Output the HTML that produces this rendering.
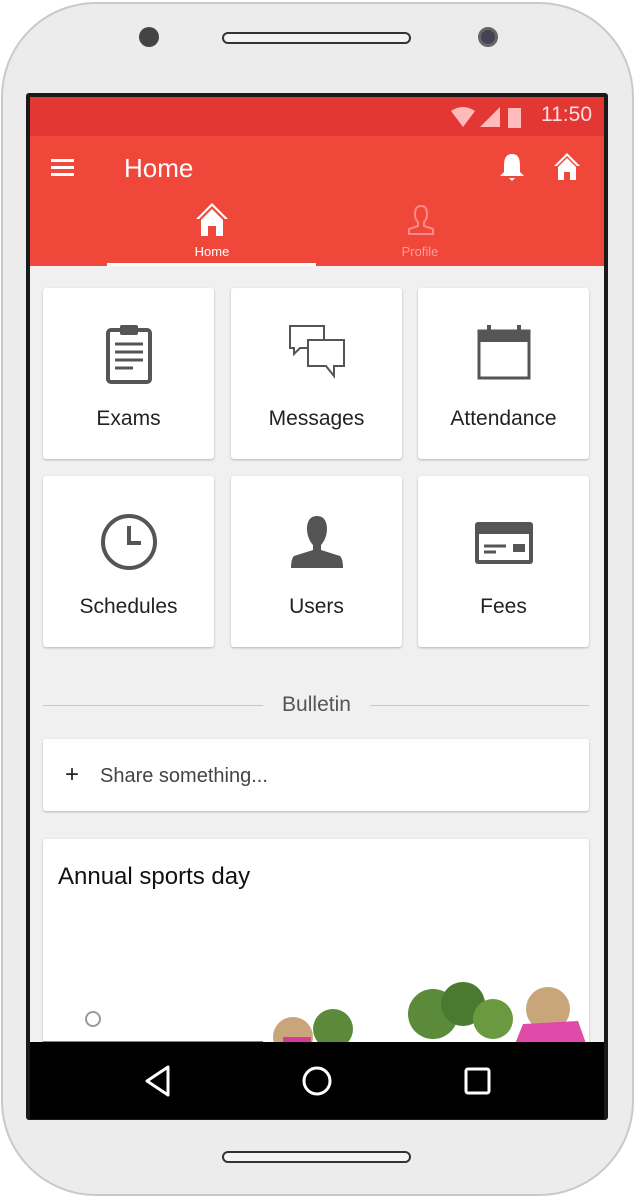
<!DOCTYPE html>
<html><head><meta charset="utf-8"><style>
*{margin:0;padding:0;box-sizing:border-box}
body{width:636px;height:1198px;background:#fff;position:relative;overflow:hidden;font-family:"Liberation Sans",sans-serif}
.phone{position:absolute;left:1px;top:2px;width:633px;height:1194px;border-radius:95px;background:#ececec;border:2px solid #c9c9c9}
.screen{position:absolute;left:26px;top:93px;width:582px;height:1027px;background:#1a1a1a;border-radius:3px}
.status{position:absolute;left:30px;top:97px;width:574px;height:39px;background:#e33734}
.toolbar{position:absolute;left:30px;top:136px;width:574px;height:130px;background:#f0473b}
.content{position:absolute;left:30px;top:266px;width:574px;height:776px;background:#f0f0f0;overflow:hidden}
.nav{position:absolute;left:30px;top:1042px;width:574px;height:77px;background:#000}
.card{position:absolute;background:#fff;border-radius:3px;box-shadow:0 1px 2px rgba(0,0,0,.25)}
.tile{width:171px;height:171px;text-align:center}
.tile span{position:absolute;left:0;right:0;top:119px;font-size:21px;color:#222}
.tile svg{position:absolute;left:50%;transform:translateX(-50%);top:36px}
</style></head><body>
<div class="phone"></div>
<div style="position:absolute;left:139px;top:27px;width:20px;height:20px;border-radius:50%;background:#444"></div>
<div style="position:absolute;left:222px;top:32px;width:189px;height:12px;border-radius:6px;border:2px solid #333;background:#f4f4f4"></div>
<div style="position:absolute;left:478px;top:27px;width:20px;height:20px;border-radius:50%;background:#445;border:3px solid #666"></div>
<div style="position:absolute;left:222px;top:1151px;width:189px;height:12px;border-radius:6px;border:2px solid #333;background:#f4f4f4"></div>
<div class="screen"></div>
<div class="status">
<svg style="position:absolute;left:421px;top:8px" width="84" height="24"><path d="M0 6 Q12 -2 24 6 L12 22Z" fill="#fbb"/><path d="M29 22 L49 2 L49 22Z" fill="#fbb"/><rect x="57" y="3" width="13" height="20" fill="#fbb"/></svg>
<div style="position:absolute;left:511px;top:6px;color:#fdd;font-size:21px">11:50</div>
</div>
<div class="toolbar">
<div style="position:absolute;left:21px;top:23px;width:23px;height:3px;background:#fff;box-shadow:0 7px 0 #fff,0 14px 0 #fff"></div>
<div style="position:absolute;left:94px;top:17px;color:#fff;font-size:26px">Home</div>
<svg style="position:absolute;left:469px;top:16px" width="26" height="30"><path d="M13 2 C6 2 5 8 5 14 L5 20 L1 24 L25 24 L21 20 L21 14 C21 8 20 2 13 2Z M10 26 L16 26 L13 29Z" fill="#fff"/></svg>
<svg style="position:absolute;left:523px;top:16px" width="28" height="30"><path d="M14 1 L1 14 L4 14 L14 4 L24 14 L27 14Z M5 15 L14 6 L23 15 L23 28 L17 28 L17 20 L11 20 L11 28 L5 28Z" fill="#fff"/></svg>
<svg style="position:absolute;left:165px;top:66px" width="34" height="36"><path d="M17 1 L1 17 L4 17 L17 4 L30 17 L33 17Z M6 18 L17 7 L28 18 L28 34 L21 34 L21 24 L13 24 L13 34 L6 34Z" fill="#fff"/></svg>
<div style="position:absolute;left:150px;top:108px;width:64px;text-align:center;color:#fff;font-size:13px">Home</div>
<svg style="position:absolute;left:376px;top:68px" width="30" height="32"><path d="M15 2 C9 2 9 8 9 11 C9 15 11 17 12 18 L12 22 L3 25 L3 30 L27 30 L27 25 L18 22 L18 18 C19 17 21 15 21 11 C21 8 21 2 15 2Z" fill="none" stroke="#f88" stroke-width="2"/></svg>
<div style="position:absolute;left:358px;top:108px;width:64px;text-align:center;color:#f99;font-size:13px">Profile</div>
<div style="position:absolute;left:77px;top:127px;width:209px;height:3px;background:#fff"></div>
</div>
<div class="content">
<div class="card tile" style="left:13px;top:22px"><svg width="48" height="60"><rect x="3" y="6" width="42" height="52" rx="3" fill="none" stroke="#555" stroke-width="4"/><rect x="15" y="1" width="18" height="10" rx="2" fill="#555"/><path d="M10 20h28M10 28h28M10 36h28M10 44h18" stroke="#555" stroke-width="3"/></svg><span>Exams</span></div>
<div class="card tile" style="left:201px;top:22px"><svg width="58" height="60"><path d="M2 2h34v22H12l-6 6v-6H2Z" fill="#fff" stroke="#555" stroke-width="2"/><path d="M20 16h36v26h-10v10l-8-10H20Z" fill="#fff" stroke="#555" stroke-width="2"/></svg><span>Messages</span></div>
<div class="card tile" style="left:388px;top:22px"><svg width="56" height="58"><rect x="3" y="7" width="50" height="47" fill="#fff" stroke="#555" stroke-width="3"/><rect x="3" y="7" width="50" height="11" fill="#555"/><rect x="11" y="1" width="4" height="11" fill="#555"/><rect x="41" y="1" width="4" height="11" fill="#555"/></svg><span>Attendance</span></div>
<div class="card tile" style="left:13px;top:210px"><svg width="60" height="60"><circle cx="30" cy="30" r="26" fill="none" stroke="#555" stroke-width="4"/><path d="M30 14v17h12" fill="none" stroke="#555" stroke-width="4"/></svg><span>Schedules</span></div>
<div class="card tile" style="left:201px;top:210px"><svg width="56" height="60"><path d="M28 4C20 4 18 11 18 17C18 25 22 31 24 33L24 38L5 44C3 46 2 50 2 56L54 56C54 50 53 46 51 44L32 38L32 33C34 31 38 25 38 17C38 11 36 4 28 4Z" fill="#555"/></svg><span>Users</span></div>
<div class="card tile" style="left:388px;top:210px"><svg width="62" height="60" style="top:44px"><rect x="2" y="2" width="58" height="42" rx="3" fill="#555"/><rect x="6" y="14" width="50" height="26" fill="#fff"/><rect x="6" y="7" width="50" height="5" fill="#555"/><path d="M11 26h22M11 32h12" stroke="#555" stroke-width="3"/><rect x="40" y="24" width="12" height="8" fill="#555"/></svg><span>Fees</span></div>
<div style="position:absolute;left:13px;top:439px;width:220px;height:1px;background:#c8c8c8"></div>
<div style="position:absolute;left:340px;top:439px;width:219px;height:1px;background:#c8c8c8"></div>
<div style="position:absolute;left:233px;top:427px;width:107px;text-align:center;font-size:21px;color:#555">Bulletin</div>
<div class="card" style="left:13px;top:473px;width:546px;height:72px"><div style="position:absolute;left:22px;top:22px;font-size:24px;color:#222">+</div><div style="position:absolute;left:57px;top:26px;font-size:20px;color:#444">Share something...</div></div>
<div class="card" style="left:13px;top:573px;width:546px;height:240px;overflow:hidden"><div style="position:absolute;left:15px;top:24px;font-size:24px;color:#111">Annual sports day</div>
<svg style="position:absolute;left:0;top:120px" width="546" height="90"><circle cx="390" cy="55" r="25" fill="#5a8a3a"/><circle cx="420" cy="45" r="22" fill="#4a7a30"/><circle cx="450" cy="60" r="20" fill="#6a9a40"/><circle cx="290" cy="70" r="20" fill="#5a8a3a"/><circle cx="250" cy="78" r="20" fill="#c9a67a"/><rect x="240" y="78" width="28" height="12" fill="#d63a9a"/><circle cx="505" cy="50" r="22" fill="#c9a67a"/><path d="M470 90 L480 65 L535 62 L545 90Z" fill="#e04aa8"/><rect x="0" y="82" width="220" height="8" fill="#7a8a6a"/><circle cx="50" cy="60" r="7" fill="none" stroke="#999" stroke-width="2"/></svg></div>
</div>
<div class="nav">
<svg style="position:absolute;left:113px;top:22px" width="350" height="34"><path d="M25 3 L4 17 L25 31Z" fill="none" stroke="#fff" stroke-width="3" stroke-linejoin="round"/><circle cx="174" cy="17" r="13" fill="none" stroke="#fff" stroke-width="3"/><rect x="323" y="5" width="23" height="24" rx="2" fill="none" stroke="#fff" stroke-width="3"/></svg>
</div>
</body></html>
